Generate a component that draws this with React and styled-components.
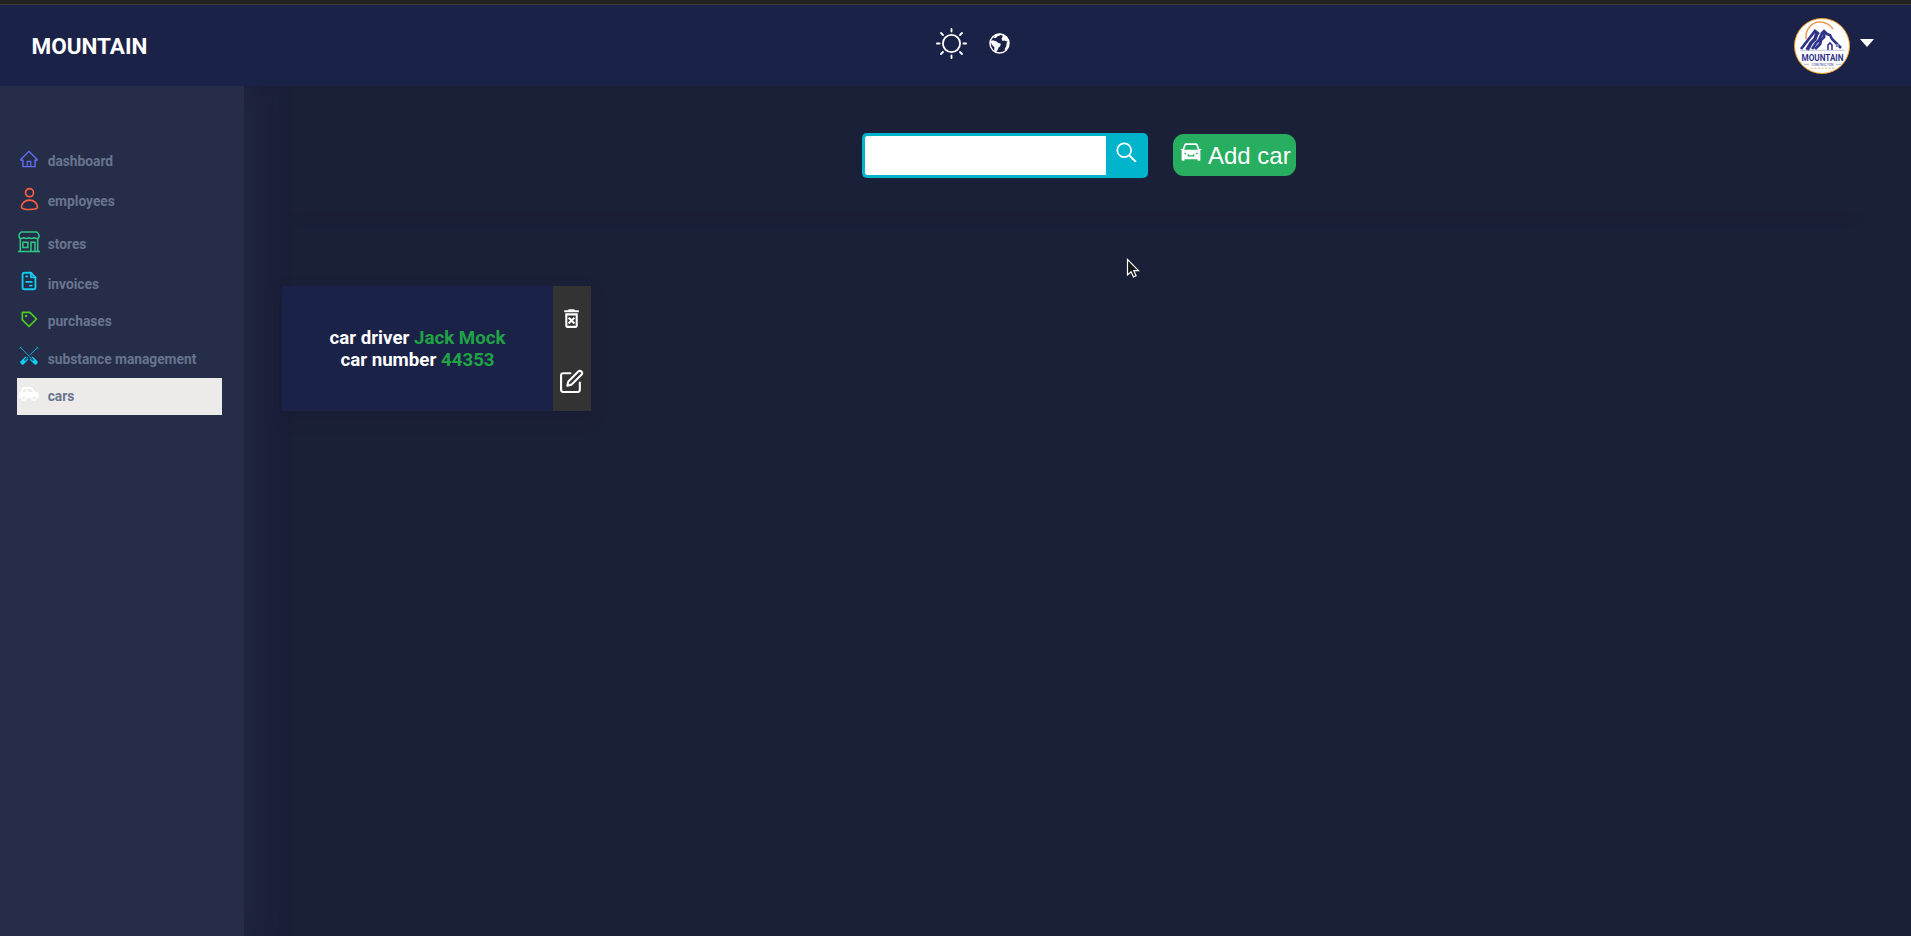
import React from 'react';
import styled, { createGlobalStyle } from 'styled-components';
import { AiOutlineHome, AiFillCar } from 'react-icons/ai';
import { TbFileInvoice } from 'react-icons/tb';
import { BiPurchaseTag } from 'react-icons/bi';
import { GiPaddles } from 'react-icons/gi';
import { FaCarSide } from 'react-icons/fa';
import { MdOutlineDeleteForever } from 'react-icons/md';
import { FiEdit } from 'react-icons/fi';

const GlobalStyle = createGlobalStyle`
  * { box-sizing: border-box; }
  body {
    margin: 0;
    background: #1b2039;
    font-family: Roboto, sans-serif;
    overflow: hidden;
  }
  svg { display: block; flex: none; }
`;

const Page = styled.div`
  display: flex;
  flex-direction: column;
  height: 100vh;
`;

const TopStrip = styled.div`
  height: 5px;
  flex: none;
  background: #222222;
  border-bottom: 1px solid #3a3a3a;
`;

const Header = styled.header`
  position: relative;
  z-index: 1;
  display: grid;
  grid-template-columns: 1fr auto 1fr;
  height: 81px;
  flex: none;
  padding: 0 37px 0 31.5px;
  background: #1b2247;
  color: #fff;
`;

const Brand = styled.h1`
  margin: 0;
  align-self: center;
  font-size: 22.5px;
  font-weight: 700;
  line-height: 26px;
`;

const HeaderTools = styled.div`
  display: flex;
  align-items: center;
  gap: 22px;
  padding: 0 2px 5px 43px;
`;

const Profile = styled.div`
  display: flex;
  align-items: center;
  justify-content: flex-end;
  gap: 10px;
`;

const Avatar = styled.div`
  width: 56px;
  height: 56px;
  border: 1px solid #f5a01d;
  border-radius: 50%;
  background: #fff;
  overflow: hidden;
`;

const Caret = styled.div`
  border: 7.5px solid transparent;
  border-top: 8px solid #fff;
  border-bottom: 0;
  margin-bottom: 6px;
`;

const Body = styled.div`
  display: flex;
  flex: 1;
`;

const Sidebar = styled.nav`
  width: 244px;
  flex: none;
  padding: 56px 22px 0 17px;
  background: #252d49;
  box-shadow: 4px 0 30px #252a45;
`;

const NavItem = styled.a`
  display: flex;
  align-items: center;
  height: ${(p) => p.$height}px;
  color: #69748f;
  background: ${(p) => (p.$active ? '#ecebe9' : 'transparent')};
  font-size: 13.75px;
  font-weight: 700;
`;

const NavLabel = styled.span`
  padding-bottom: ${(p) => p.$lift || 0}px;
`;

const NavIcon = styled.span`
  display: flex;
  justify-content: center;
  width: 24px;
  margin-right: 6.7px;
  padding-bottom: ${(p) => p.$lift}px;
  color: ${(p) => p.$color};
`;

const Main = styled.main`
  flex: 1;
  padding: 0 38px;
`;

const Toolbar = styled.div`
  display: flex;
  align-items: flex-start;
  justify-content: center;
  gap: 25px;
  height: 126px;
  padding: 47px 0 0 2px;
  box-shadow: 0 22px 10px -20px #1a1e34;
`;

const SearchBox = styled.form`
  display: flex;
  width: 286px;
  height: 45px;
`;

const SearchInput = styled.input`
  width: 244px;
  height: 45px;
  padding: 0 10px;
  border: 3px solid #00b4cc;
  border-right: 0;
  border-radius: 5px 0 0 5px;
  background: #fff;
  font-size: 16px;
  outline: none;
`;

const SearchButton = styled.button`
  display: flex;
  justify-content: center;
  width: 42px;
  height: 45px;
  padding: 9px 1px 0 0;
  border: 0;
  border-radius: 0 5px 5px 0;
  background: #00b4cc;
  color: #fff;
`;

const AddButton = styled.button`
  display: flex;
  gap: 5.5px;
  width: 123px;
  height: 42px;
  margin-top: 1px;
  padding: 6px 0 0 6px;
  border: 0;
  border-radius: 11px;
  background: #27ae60;
  color: #fff;
  font: 24px/31px "Liberation Sans", Arial, sans-serif;
  white-space: nowrap;
`;

const Cards = styled.section`
  display: flex;
  padding-top: 74px;
`;

const Card = styled.article`
  display: flex;
  width: 309px;
  height: 125px;
  box-shadow: 0 6px 14px rgba(20, 24, 42, 0.35);
`;

const CardInfo = styled.div`
  display: flex;
  flex: 1;
  flex-direction: column;
  align-items: center;
  justify-content: center;
  background: #1b2247;
  color: #fff;
  font-size: 18.72px;
  font-weight: 700;
  line-height: 22px;
`;

const Value = styled.span`
  color: #1fa345;
`;

const CardActions = styled.div`
  display: flex;
  flex-direction: column;
  align-items: center;
  justify-content: space-between;
  width: 38px;
  padding: 20px 1px 17px 0;
  background: #333333;
  color: #fff;
`;

const Pointer = styled.svg`
  position: absolute;
  left: 1126px;
  top: 258px;
`;

function SunIcon() {
  return (
    <svg width="31" height="31" viewBox="0 0 31 31" fill="none" stroke="currentColor" strokeWidth="1.8" strokeLinecap="round">
      <circle cx="15.500" cy="15.500" r="8.600" />
      <path d="M15.500.9v2.700M15.500 27.400v2.700M.9 15.500h2.700M27.400 15.500h2.700M5 5l2 2M24 24l2 2M5 26l2-2M24 7l2-2" />
    </svg>
  );
}

function GlobeIcon() {
  return (
    <svg width="21" height="21" viewBox="0 0 21 21" fill="currentColor">
      <circle cx="10.500" cy="10.500" r="9.500" fill="none" stroke="currentColor" strokeWidth="1.500" />
      <path d="M2 8l2-.8 3.500 1.200L9 9.800l2.800 1-.6 2.500-1.800 1.400-.8 2.600-1.700 2-1.700-1 .2-4-2.300-2.300L2 10zM4 5l4-4 4-.5-1 2-2.500.8L7 5zM13.500.8l4.500 3 2 4-2.500.6-1.800-.9-2.200.4-1-2.100 1-1.700zM18 8.500l2 .5-.5 5-2.500 3-1.500-.8 1.700-3z" />
    </svg>
  );
}

function SearchIcon() {
  return (
    <svg width="21" height="21" viewBox="0 0 21 21" fill="none" stroke="currentColor" strokeWidth="1.700">
      <circle cx="8.200" cy="8.200" r="6.900" />
      <path d="M13.200 13.200l6.700 6.700" strokeWidth="2" />
    </svg>
  );
}

function PersonIcon() {
  return (
    <svg width="20" height="24" viewBox="0 0 20 24" fill="none" stroke="currentColor" strokeWidth="1.700">
      <circle cx="10.500" cy="5.700" r="4" />
      <path d="M2.500 20.300c0-4 3.600-7.200 8-7.200s8 3.200 8 7.200c0 1.500-3.600 2.200-8 2.200s-8-.7-8-2.200z" />
    </svg>
  );
}

function StoreIcon() {
  return (
    <svg width="22" height="22" viewBox="0 0 22 22" fill="none" stroke="currentColor" strokeWidth="1.500">
      <path d="M3.500.9h15c1 0 2.600 2.500 2.600 4.300 0 1.300-1.100 2.300-2.500 2.300s-2.500-.6-2.500-1.500c0 .9-1.100 1.500-2.500 1.500S11 6.900 11 6c0 .9-1.200 1.500-2.600 1.500S5.900 6.900 5.900 6c0 .9-1.100 1.500-2.500 1.500S.9 6.500.9 5.200C.9 3.400 2.500.9 3.500.9z" />
      <path d="M2.300 7.300v13M19.700 7.300v13M0 20.500h22M4.900 11.300h5v5.200h-5zM13 20v-8.700h4V20" />
    </svg>
  );
}

function Logo() {
  return (
    <svg width="54" height="54" viewBox="0 0 54 54">
      <path d="M11 20C10 10 17 3 25 3c6 0 10 3 13 7" fill="none" stroke="#ee9b55" strokeWidth="1.600" />
      <g fill="none" stroke="#30338a">
        <path d="M6 30l7-9 7-9 4 3" strokeWidth="2.800" />
        <path d="M22 14l-2 6-4 4-4 7" strokeWidth="3.600" />
        <path d="M17 30l4-6 3-3 3-7 2-2 3 3 3 1 2 4 9 9" strokeWidth="2.600" />
        <path d="M29 13v5l-3 3-1 4-5 5" strokeWidth="3" />
        <path d="M33 31v-5l2-2 2 2v5" strokeWidth="1.600" />
      </g>
      <path d="M41 25h3v3h-3z" fill="#8184b5" />
      <path d="M5 31.300h45" stroke="#a9abd0" strokeWidth=".7" />
      <text x="27.500" y="42" textAnchor="middle" textLength="42" lengthAdjust="spacingAndGlyphs" fontFamily="Roboto" fontWeight="700" fontSize="9.200" fill="#30338a">MOUNTAIN</text>
      <text x="27.500" y="46.500" textAnchor="middle" textLength="22" lengthAdjust="spacingAndGlyphs" fontFamily="Roboto" fontWeight="400" fontSize="3.600" fill="#30338a">CONSTRUCTION</text>
      <path d="M9 45.300h5M41 45.300h6" stroke="#8184b5" strokeWidth=".6" />
      <path d="M16 49.300h23" stroke="#efc9a4" strokeWidth="1.500" strokeDasharray="2 1.500" />
    </svg>
  );
}

const navItems = [
  { label: 'dashboard', height: 38, color: '#6070ee', lift: 4, icon: <AiOutlineHome size={20} /> },
  { label: 'employees', height: 42, color: '#fa6040', lift: 5, icon: <PersonIcon /> },
  { label: 'stores', height: 43, color: '#2ec984', lift: 4, icon: <StoreIcon /> },
  { label: 'invoices', height: 38, color: '#12cdf2', lift: 7, icon: <TbFileInvoice size={22} /> },
  { label: 'purchases', height: 37, color: '#4bce20', lift: 5, labelLift: 1.5, icon: <BiPurchaseTag size={20} /> },
  { label: 'substance management', height: 38, color: '#12cdf2', lift: 6, icon: <GiPaddles size={20} /> },
  { label: 'cars', height: 37, color: '#ffffff', lift: 5, labelLift: 1.5, icon: <FaCarSide size={20} />, active: true },
];

export default function App() {
  return (
    <Page>
      <GlobalStyle />
      <TopStrip />
      <Header>
        <Brand>MOUNTAIN</Brand>
        <HeaderTools>
          <SunIcon />
          <GlobeIcon />
        </HeaderTools>
        <Profile>
          <Avatar><Logo /></Avatar>
          <Caret />
        </Profile>
      </Header>
      <Body>
        <Sidebar>
          {navItems.map((item) => (
            <NavItem key={item.label} $height={item.height} $active={item.active}>
              <NavIcon $color={item.color} $lift={item.lift}>{item.icon}</NavIcon>
              <NavLabel $lift={item.labelLift}>{item.label}</NavLabel>
            </NavItem>
          ))}
        </Sidebar>
        <Main>
          <Toolbar>
            <SearchBox>
              <SearchInput />
              <SearchButton type="button"><SearchIcon /></SearchButton>
            </SearchBox>
            <AddButton><AiFillCar size={24} />Add car</AddButton>
          </Toolbar>
          <Cards>
            <Card>
              <CardInfo>
                <div>car driver <Value>Jack Mock</Value></div>
                <div>car number <Value>44353</Value></div>
              </CardInfo>
              <CardActions>
                <MdOutlineDeleteForever size={25} />
                <FiEdit size={25} />
              </CardActions>
            </Card>
          </Cards>
        </Main>
      </Body>
      <Pointer width="14" height="21" viewBox="0 0 14 21">
        <path d="M1.500 1.500v15.500l3.600-3.300 2.400 5.200 2.600-1.200-2.300-5h4.700z" fill="#161616" stroke="#fff" strokeWidth="1.200" />
      </Pointer>
    </Page>
  );
}
